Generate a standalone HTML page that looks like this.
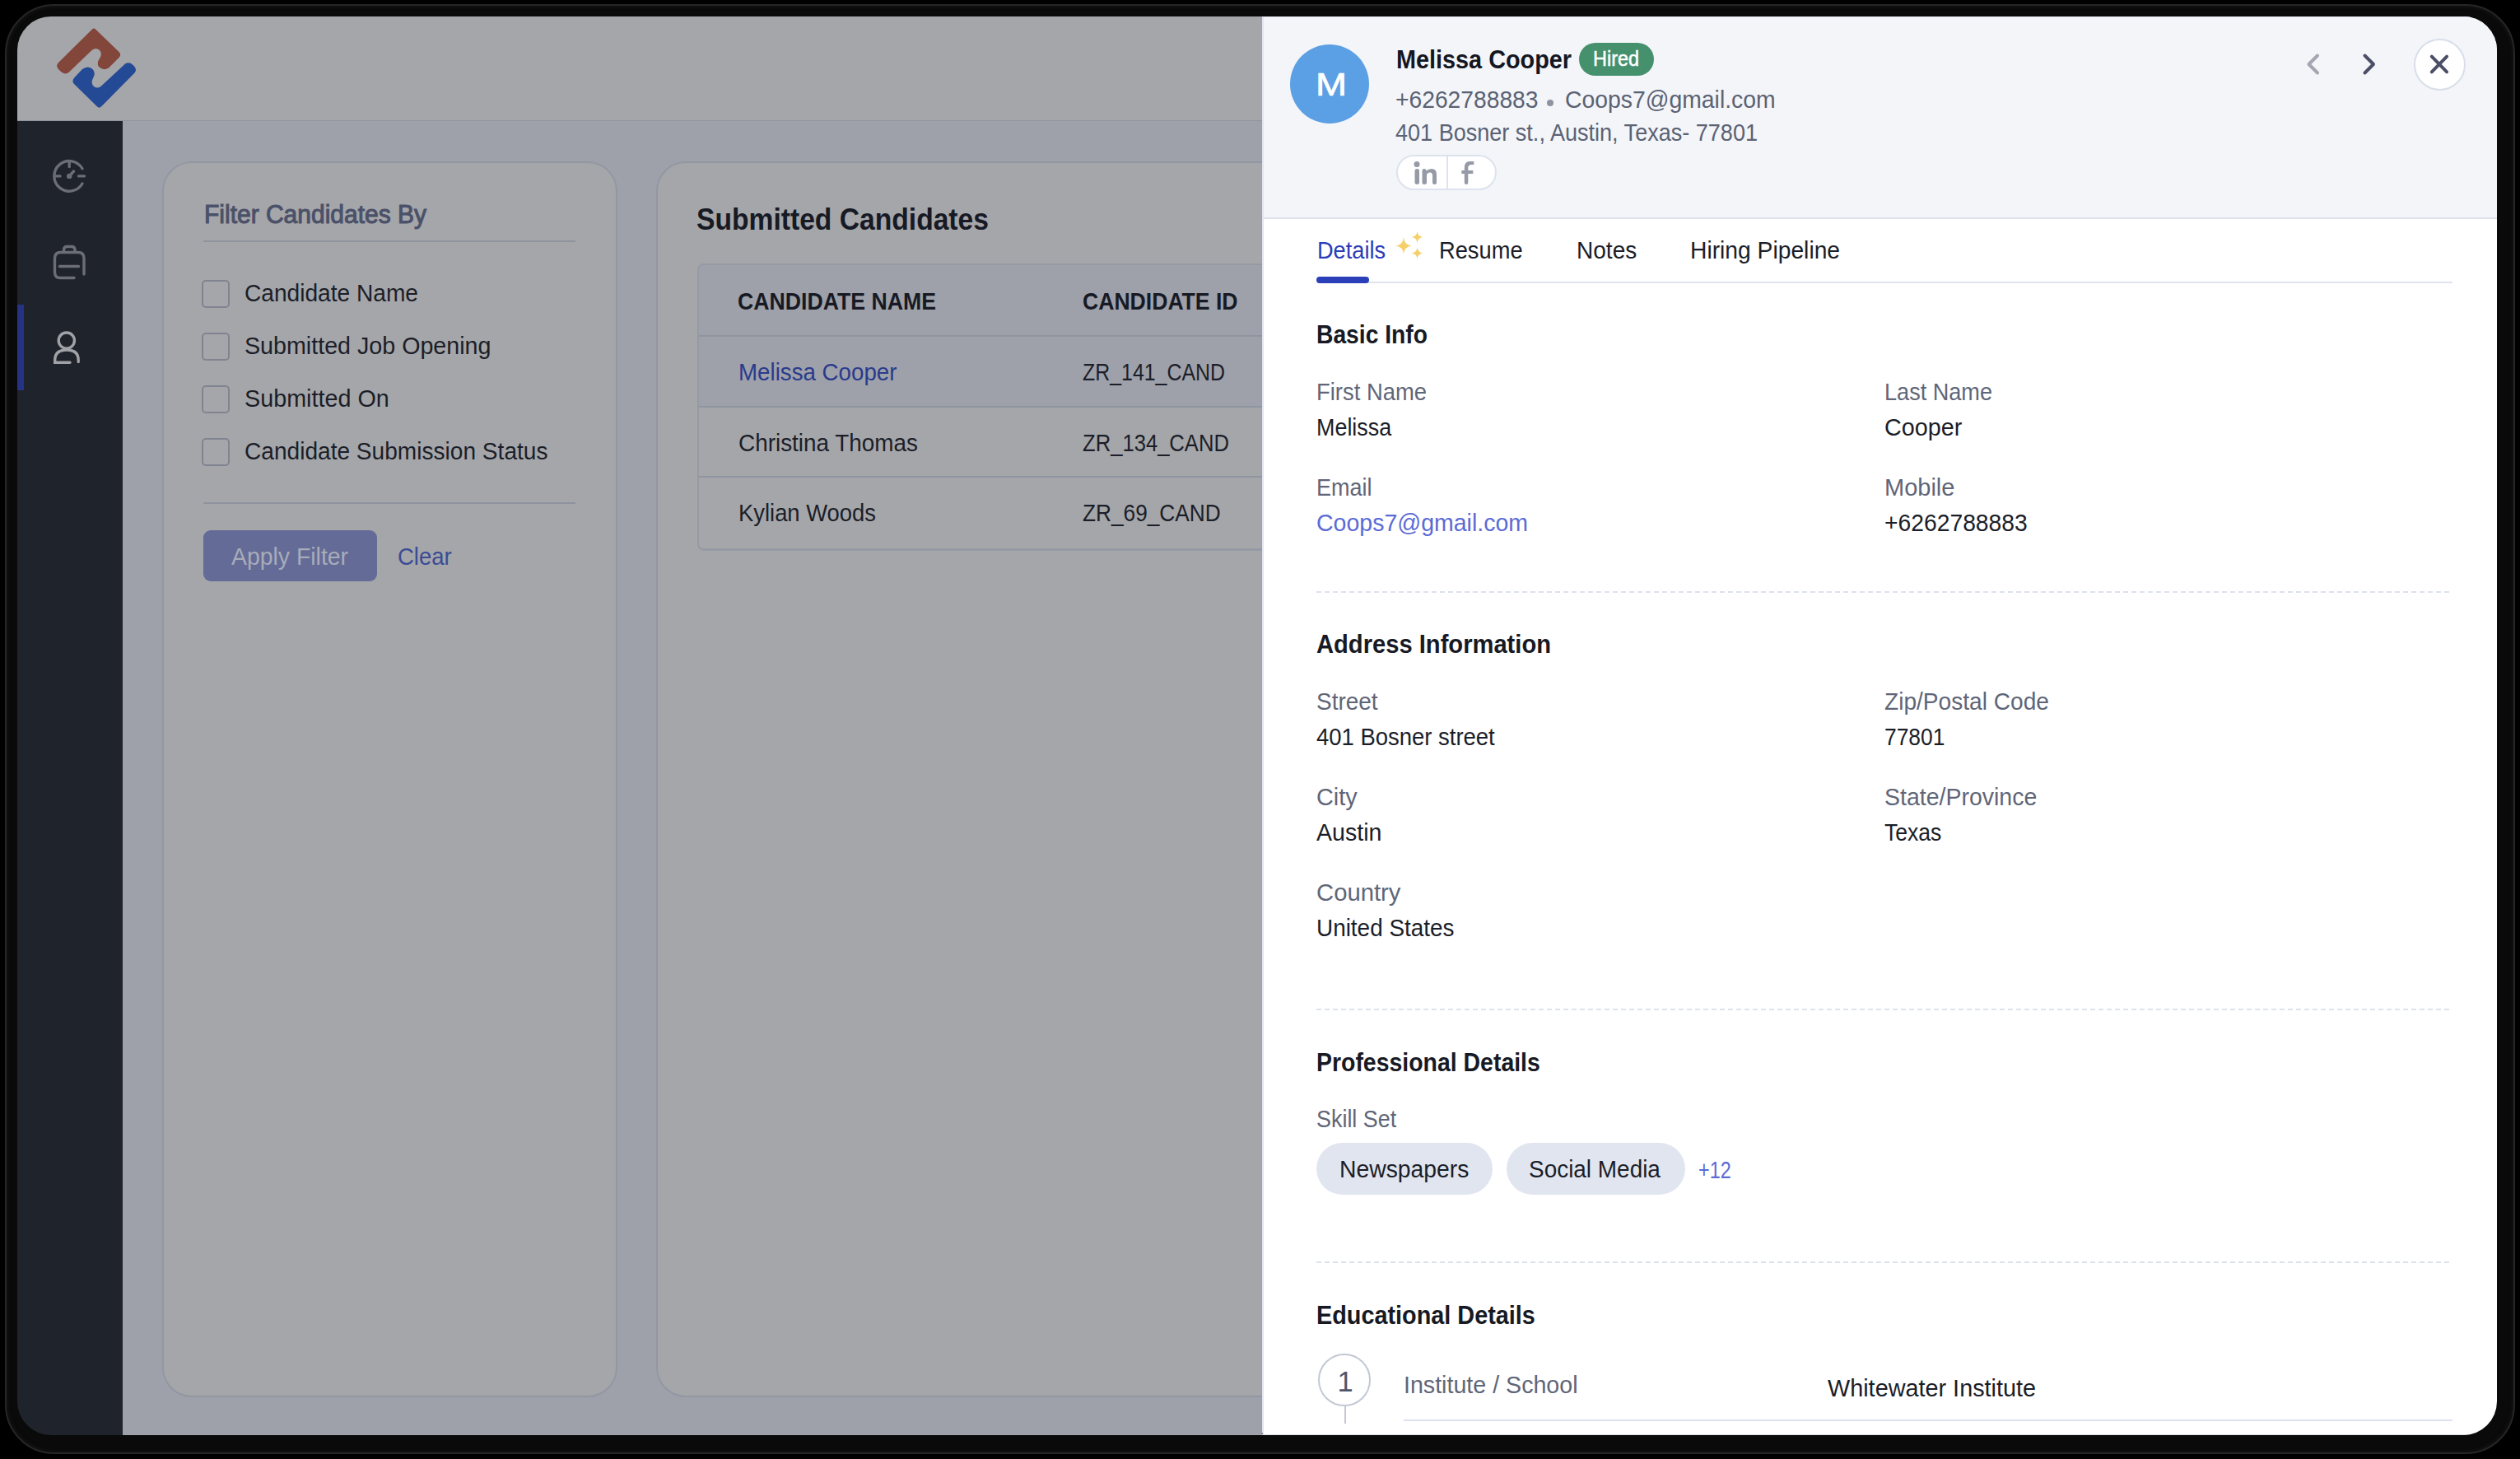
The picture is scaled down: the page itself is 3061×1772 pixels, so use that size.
<!DOCTYPE html>
<html><head><meta charset="utf-8"><title>Candidate details</title>
<style>
html,body{margin:0;padding:0;}
body{width:3061px;height:1772px;background:#000;position:relative;overflow:hidden;font-family:"Liberation Sans",sans-serif;}
.frame{position:absolute;left:6px;top:5px;width:3045px;height:1757px;border:2px solid #262626;border-radius:60px;background:#0a0a0a;box-shadow:inset 0 0 5px #1c1c1c;}
.screen{position:absolute;left:0;top:0;width:3061px;height:1772px;clip-path:inset(20px 28px 29px 21px round 41px);}
.r{position:absolute;}
.t{position:absolute;white-space:nowrap;line-height:1;transform-origin:0 0;}
</style></head><body>
<div class="frame"></div>
<div class="screen">
<div class="r" style="left:21px;top:20px;width:1512px;height:126px;background:#a5a6aa;"></div>
<div class="r" style="left:21px;top:146px;width:1512px;height:1px;background:#8f949e;"></div>
<div class="r" style="left:21px;top:147px;width:128px;height:1596px;background:#1f232b;"></div>
<div class="r" style="left:149px;top:147px;width:1384px;height:1596px;background:#9ea1a9;"></div>
<div class="r" style="left:21px;top:370px;width:8px;height:104px;background:#243383;"></div>
<svg class="r" style="left:60px;top:28px" width="115" height="110" viewBox="0 0 115 110">
<path fill="#82463a" d="M52 7.5 Q54 5.5 56 7.5 L84.5 35 Q87.5 38 85 41.5 L72 54.5 Q65 58.5 60 53 Q57 48.5 61 43 Q65 37 60.5 32.5 Q55.5 29 51 33.5 L24 59.5 Q19 63.5 14 59 L10.5 55.5 Q7.5 51.5 11 48 Z"/>
<path fill="#254a95" d="M57 100.5 L30 74 Q26.5 70.5 30.5 66 L40 56 Q47 51 52.5 56 Q56.5 60.5 53.5 66 Q49.5 72.5 54 77 Q59 80.5 63.5 76 L92 49.5 Q97 46.5 101 50.5 L103.5 53 Q106.5 57 103.5 60.5 L63.5 101 Q60 104.5 57 100.5 Z"/>
</svg>
<svg class="r" style="left:55px;top:185px" width="60" height="60" viewBox="0 0 60 60" fill="none" stroke="#6b6e76" stroke-width="3.4" stroke-linecap="round">
<path d="M45 19.75 A18.3 18.3 0 1 0 45 38"/><line x1="29.2" y1="10.6" x2="29.2" y2="17.5"/><line x1="13.5" y1="28.9" x2="18" y2="28.9"/><line x1="40.5" y1="28.9" x2="47.5" y2="28.9"/><circle cx="29.2" cy="28.9" r="2.2" fill="#6b6e76" stroke-width="2"/><line x1="29.2" y1="28.9" x2="34.5" y2="23"/>
</svg>
<svg class="r" style="left:60px;top:293px" width="50" height="50" viewBox="0 0 50 50" fill="none" stroke="#6b6e76" stroke-width="3.4" stroke-linecap="round">
<path d="M17.5 12.5 V10.5 Q17.5 6.5 21.5 6.5 H27 Q31 6.5 31 10.5 V12.5"/><path d="M42 40 V21 Q42 13.5 35 13.5 H13.5 Q6.5 13.5 6.5 21 V37.5 Q6.5 44.5 13 44.5 H30"/><line x1="12.5" y1="30.5" x2="35.5" y2="30.5"/>
</svg>
<svg class="r" style="left:60px;top:398px" width="44" height="50" viewBox="0 0 44 50" fill="none" stroke="#a0a2a7" stroke-width="3.4" stroke-linecap="round">
<circle cx="20.8" cy="15.6" r="9.6"/><path d="M25 42.3 H6.7 V39.5 Q6.7 27 21 27 Q35.2 27 35.2 39.5 V41.5"/>
</svg>
<div class="r" style="left:197px;top:196px;width:549px;height:1497px;border:2px solid #9297a2;border-radius:36px;background:#a5a6aa"></div>
<div class="t" style="left:248.0px;top:243.9px;font-size:32.0px;color:#4b5169;transform:scaleX(0.9371);-webkit-text-stroke:1.1px #4b5169;">Filter Candidates By</div>
<div class="r" style="left:247px;top:292px;width:452px;height:2px;background:#8e939d;"></div>
<div class="r" style="left:245px;top:340px;width:30px;height:30px;border:2px solid #7f8490;border-radius:5px"></div>
<div class="t" style="left:297.0px;top:341.0px;font-size:29.5px;color:#1b1e28;transform:scaleX(0.9531);">Candidate Name</div>
<div class="r" style="left:245px;top:404px;width:30px;height:30px;border:2px solid #7f8490;border-radius:5px"></div>
<div class="t" style="left:297.0px;top:405.0px;font-size:29.5px;color:#1b1e28;transform:scaleX(0.9713);">Submitted Job Opening</div>
<div class="r" style="left:245px;top:468px;width:30px;height:30px;border:2px solid #7f8490;border-radius:5px"></div>
<div class="t" style="left:297.0px;top:469.0px;font-size:29.5px;color:#1b1e28;transform:scaleX(0.9746);">Submitted On</div>
<div class="r" style="left:245px;top:532px;width:30px;height:30px;border:2px solid #7f8490;border-radius:5px"></div>
<div class="t" style="left:297.0px;top:533.0px;font-size:29.5px;color:#1b1e28;transform:scaleX(0.9522);">Candidate Submission Status</div>
<div class="r" style="left:247px;top:610px;width:452px;height:2px;background:#8e939d;"></div>
<div class="r" style="left:247px;top:644px;width:211px;height:62px;border-radius:9px;background:#636b96"></div>
<div class="t" style="left:281.0px;top:661.5px;font-size:29.0px;color:#a8abba;transform:scaleX(0.9793);">Apply Filter</div>
<div class="t" style="left:483.0px;top:661.5px;font-size:29.0px;color:#3a4c94;transform:scaleX(0.9487);">Clear</div>
<div class="r" style="left:797px;top:196px;width:900px;height:1497px;border:2px solid #9297a2;border-radius:36px;background:#a5a6aa"></div>
<div class="t" style="left:846.0px;top:247.7px;font-size:37.0px;color:#171a24;font-weight:700;transform:scaleX(0.9088);">Submitted Candidates</div>
<div class="r" style="left:847px;top:320px;width:900px;height:344px;border:2px solid #959aa5;border-bottom-width:3px;border-radius:8px;background:#a5a6aa;overflow:hidden"><div style="position:absolute;left:0;top:0;width:900px;height:171px;background:#9ea1aa"></div><div style="position:absolute;left:0;top:85px;width:900px;height:2px;background:#8f95a0"></div><div style="position:absolute;left:0;top:171px;width:900px;height:2px;background:#8f95a0"></div><div style="position:absolute;left:0;top:256px;width:900px;height:2px;background:#8f95a0"></div></div>
<div class="t" style="left:896.0px;top:351.0px;font-size:29.5px;color:#171a24;font-weight:700;transform:scaleX(0.9039);">CANDIDATE NAME</div>
<div class="t" style="left:1315.0px;top:351.0px;font-size:29.5px;color:#171a24;font-weight:700;transform:scaleX(0.9013);">CANDIDATE ID</div>
<div class="t" style="left:896.6px;top:436.8px;font-size:29.5px;color:#2a3b8c;transform:scaleX(0.9390);">Melissa Cooper</div>
<div class="t" style="left:1315.0px;top:436.8px;font-size:29.5px;color:#1b1e28;transform:scaleX(0.8439);">ZR_141_CAND</div>
<div class="t" style="left:896.6px;top:522.6px;font-size:29.5px;color:#1b1e28;transform:scaleX(0.9453);">Christina Thomas</div>
<div class="t" style="left:1315.0px;top:522.6px;font-size:29.5px;color:#1b1e28;transform:scaleX(0.8683);">ZR_134_CAND</div>
<div class="t" style="left:896.6px;top:608.4px;font-size:29.5px;color:#1b1e28;transform:scaleX(0.9284);">Kylian Woods</div>
<div class="t" style="left:1315.0px;top:608.4px;font-size:29.5px;color:#1b1e28;transform:scaleX(0.8897);">ZR_69_CAND</div>
<div class="r" style="left:1533px;top:20px;width:1500px;height:1723px;background:#fff;border-left:2px solid #e1e5ef;box-sizing:border-box;border-bottom-left-radius:4px"></div>
<div class="r" style="left:1535px;top:20px;width:1498px;height:244px;background:#f3f5f9;"></div>
<div class="r" style="left:1535px;top:20px;width:1498px;height:1px;background:#e1e5ef;"></div>
<div class="r" style="left:1535px;top:264px;width:1498px;height:2px;background:#dde2ec;"></div>
<div class="r" style="left:1567px;top:54px;width:96px;height:96px;border-radius:50%;background:#5b9fe4"></div>
<div class="t" style="left:1597.5px;top:83px;font-size:39px;color:#fff;transform:scaleX(1.17);-webkit-text-stroke:0.7px #fff;">M</div>
<div class="t" style="left:1696.0px;top:56.5px;font-size:31.0px;color:#141722;font-weight:700;transform:scaleX(0.9296);">Melissa Cooper</div>
<div class="r" style="left:1918px;top:52px;width:91px;height:40px;border-radius:20px;background:#45906d"></div>
<div class="t" style="left:1934.6px;top:58.3px;font-size:26.0px;color:#ffffff;transform:scaleX(0.9014);-webkit-text-stroke:0.5px #fff;">Hired</div>
<div class="t" style="left:1695.0px;top:107.2px;font-size:29.0px;color:#5b6273;transform:scaleX(0.9734);">+6262788883</div>
<div class="r" style="left:1879px;top:121px;width:8px;height:8px;border-radius:50%;background:#8e93a0"></div>
<div class="t" style="left:1900.6px;top:107.2px;font-size:29.0px;color:#5b6273;transform:scaleX(0.9774);">Coops7@gmail.com</div>
<div class="t" style="left:1695.0px;top:147.0px;font-size:29.0px;color:#5b6273;transform:scaleX(0.9325);">401 Bosner st., Austin, Texas- 77801</div>
<div class="r" style="left:1696px;top:188px;width:122px;height:43px;border:2px solid #dde3ee;border-radius:22px;background:#fff;box-sizing:border-box"></div>
<div class="r" style="left:1757px;top:189px;width:2px;height:41px;background:#dde3ee;"></div>
<svg class="r" style="left:1710px;top:192px" width="100" height="36" viewBox="0 0 100 36" fill="#959aa6">
<circle cx="11" cy="7.5" r="3.5"/><rect x="8.5" y="13" width="5.5" height="19" rx="2.7"/>
<path d="M17.5 15.5 Q17.5 13 20 13 Q22.5 13 22.5 15.5 Q25 13 29 13 Q35 13 35 20 V29.5 Q35 32 32.5 32 Q30 32 30 29.5 V21 Q30 17.5 27 17.5 Q23 17.5 23 21 V29.5 Q23 32 20 32 Q17.5 32 17.5 29.5 Z"/>
<path transform="translate(2.3,0)" d="M69 32 Q66.5 32 66.5 29.5 V19 H63 V15 H66.5 V12 Q66.5 4 73 4 H78 V8 H75 Q71 8 71 12 V15 H77 V19 H71 V29.5 Q71 32 69 32 Z"/>
</svg>
<svg class="r" style="left:2795px;top:60px" width="100" height="36" viewBox="0 0 100 36" fill="none" stroke-width="4" stroke-linecap="round" stroke-linejoin="round">
<path d="M20 7.5 L9.5 18 L20 28.5" stroke="#a4a7b2"/><path d="M77.5 7.5 L88 18 L77.5 28.5" stroke="#4a4f66"/>
</svg>
<div class="r" style="left:2931.5px;top:46.5px;width:63px;height:63px;border-radius:50%;background:#fff;border:2px solid #d9dee9;box-sizing:border-box"></div>
<svg class="r" style="left:2943px;top:58px" width="40" height="40" viewBox="0 0 40 40" fill="none" stroke="#4a4f66" stroke-width="4" stroke-linecap="round">
<path d="M10.8 10.6 L29.1 29.3 M29.1 10.6 L10.8 29.3"/>
</svg>
<div class="t" style="left:1600.0px;top:288.8px;font-size:29.5px;color:#2b3cb9;transform:scaleX(0.9209);">Details</div>
<svg class="r" style="left:1690px;top:278px" width="44" height="40" viewBox="0 0 44 40" fill="#f5d06a">
<path d="M15 1.5 Q16 10.5 25 11.5 Q16 12.5 15 21.5 Q14 12.5 5 11.5 Q14 10.5 15 1.5 Z" transform="translate(0,9)"/>
<path d="M31.5 3 Q32.2 9.3 38.5 10 Q32.2 10.7 31.5 17 Q30.8 10.7 24.5 10 Q30.8 9.3 31.5 3 Z" transform="translate(0,0)"/>
<path d="M31.5 3 Q32.2 9.3 38.5 10 Q32.2 10.7 31.5 17 Q30.8 10.7 24.5 10 Q30.8 9.3 31.5 3 Z" transform="translate(0,19.5)"/>
</svg>
<div class="t" style="left:1748.0px;top:288.8px;font-size:29.5px;color:#1b1e28;transform:scaleX(0.9247);">Resume</div>
<div class="t" style="left:1914.7px;top:288.8px;font-size:29.5px;color:#1b1e28;transform:scaleX(0.9504);">Notes</div>
<div class="t" style="left:2053.4px;top:288.8px;font-size:29.5px;color:#1b1e28;transform:scaleX(0.9572);">Hiring Pipeline</div>
<div class="r" style="left:1600px;top:342px;width:1379px;height:2px;background:#dfe3ee;"></div>
<div class="r" style="left:1599px;top:336px;width:64px;height:8px;border-radius:4px;background:#2b40b8"></div>
<div class="t" style="left:1599.0px;top:390.4px;font-size:32.0px;color:#171a24;font-weight:700;transform:scaleX(0.8831);">Basic Info</div>
<div class="t" style="left:1599.0px;top:461.5px;font-size:29.0px;color:#5f6678;transform:scaleX(0.9453);">First Name</div>
<div class="t" style="left:2289.0px;top:461.5px;font-size:29.0px;color:#5f6678;transform:scaleX(0.9340);">Last Name</div>
<div class="t" style="left:1599.0px;top:505.3px;font-size:29.0px;color:#1b1e28;transform:scaleX(0.9281);">Melissa</div>
<div class="t" style="left:2289.0px;top:505.3px;font-size:29.0px;color:#1b1e28;transform:scaleX(0.9924);">Cooper</div>
<div class="t" style="left:1599.0px;top:577.5px;font-size:29.0px;color:#5f6678;transform:scaleX(0.9310);">Email</div>
<div class="t" style="left:2289.0px;top:577.5px;font-size:29.0px;color:#5f6678;">Mobile</div>
<div class="t" style="left:1599.0px;top:621.2px;font-size:29.0px;color:#5b6bd6;transform:scaleX(0.9828);">Coops7@gmail.com</div>
<div class="t" style="left:2289.0px;top:621.2px;font-size:29.0px;color:#1b1e28;transform:scaleX(0.9750);">+6262788883</div>
<div class="r" style="left:1599px;top:718px;width:1380px;height:2px;background:repeating-linear-gradient(90deg,#dde2ee 0 6px,transparent 6px 10px)"></div>
<div class="t" style="left:1599.0px;top:765.7px;font-size:32.0px;color:#171a24;font-weight:700;transform:scaleX(0.9109);">Address Information</div>
<div class="t" style="left:1599.0px;top:837.5px;font-size:29.0px;color:#5f6678;transform:scaleX(0.9641);">Street</div>
<div class="t" style="left:2289.0px;top:837.5px;font-size:29.0px;color:#5f6678;transform:scaleX(0.9691);">Zip/Postal Code</div>
<div class="t" style="left:1599.0px;top:881.4px;font-size:29.0px;color:#1b1e28;transform:scaleX(0.9468);">401 Bosner street</div>
<div class="t" style="left:2289.0px;top:881.4px;font-size:29.0px;color:#1b1e28;transform:scaleX(0.9104);">77801</div>
<div class="t" style="left:1599.0px;top:953.5px;font-size:29.0px;color:#5f6678;transform:scaleX(0.9920);">City</div>
<div class="t" style="left:2289.0px;top:953.5px;font-size:29.0px;color:#5f6678;transform:scaleX(0.9824);">State/Province</div>
<div class="t" style="left:1599.0px;top:997.2px;font-size:29.0px;color:#1b1e28;transform:scaleX(0.9848);">Austin</div>
<div class="t" style="left:2289.0px;top:997.2px;font-size:29.0px;color:#1b1e28;transform:scaleX(0.9162);">Texas</div>
<div class="t" style="left:1599.0px;top:1069.5px;font-size:29.0px;color:#5f6678;transform:scaleX(1.0089);">Country</div>
<div class="t" style="left:1599.0px;top:1113.1px;font-size:29.0px;color:#1b1e28;transform:scaleX(0.9620);">United States</div>
<div class="r" style="left:1599px;top:1225px;width:1380px;height:2px;background:repeating-linear-gradient(90deg,#dde2ee 0 6px,transparent 6px 10px)"></div>
<div class="t" style="left:1599.0px;top:1274.4px;font-size:32.0px;color:#171a24;font-weight:700;transform:scaleX(0.8886);">Professional Details</div>
<div class="t" style="left:1599.0px;top:1345.3px;font-size:29.0px;color:#5f6678;transform:scaleX(0.9279);">Skill Set</div>
<div class="r" style="left:1599px;top:1388px;width:214px;height:63px;border-radius:32px;background:#e1e5ef"></div>
<div class="t" style="left:1626.5px;top:1406.0px;font-size:29.0px;color:#1b1e28;transform:scaleX(0.9767);">Newspapers</div>
<div class="r" style="left:1830px;top:1388px;width:217px;height:63px;border-radius:32px;background:#e1e5ef"></div>
<div class="t" style="left:1857.4px;top:1406.0px;font-size:29.0px;color:#1b1e28;transform:scaleX(0.9631);">Social Media</div>
<div class="t" style="left:2063.0px;top:1407.2px;font-size:29.0px;color:#5b6bd6;transform:scaleX(0.8061);">+12</div>
<div class="r" style="left:1599px;top:1532px;width:1380px;height:2px;background:repeating-linear-gradient(90deg,#dde2ee 0 6px,transparent 6px 10px)"></div>
<div class="t" style="left:1599.0px;top:1580.8px;font-size:32.0px;color:#171a24;font-weight:700;transform:scaleX(0.9006);">Educational Details</div>
<div class="r" style="left:1601px;top:1644px;width:64px;height:64px;border-radius:50%;border:2px solid #c3c8d5;box-sizing:border-box"></div>
<div class="t" style="left:1624.5px;top:1661.2px;font-size:34.5px;color:#4f566b;">1</div>
<div class="r" style="left:1633px;top:1708px;width:2px;height:21px;background:#c3c8d5;"></div>
<div class="t" style="left:1704.6px;top:1667.9px;font-size:29.0px;color:#5f6678;transform:scaleX(0.9866);">Institute / School</div>
<div class="t" style="left:2219.7px;top:1671.5px;font-size:29.0px;color:#1b1e28;transform:scaleX(0.9936);">Whitewater Institute</div>
<div class="r" style="left:1705px;top:1724px;width:1274px;height:2px;background:#dde2ee;"></div>
<div class="r" style="left:1533px;top:1742px;width:1500px;height:1px;background:#d8dde8;"></div>
</div>
</body></html>
